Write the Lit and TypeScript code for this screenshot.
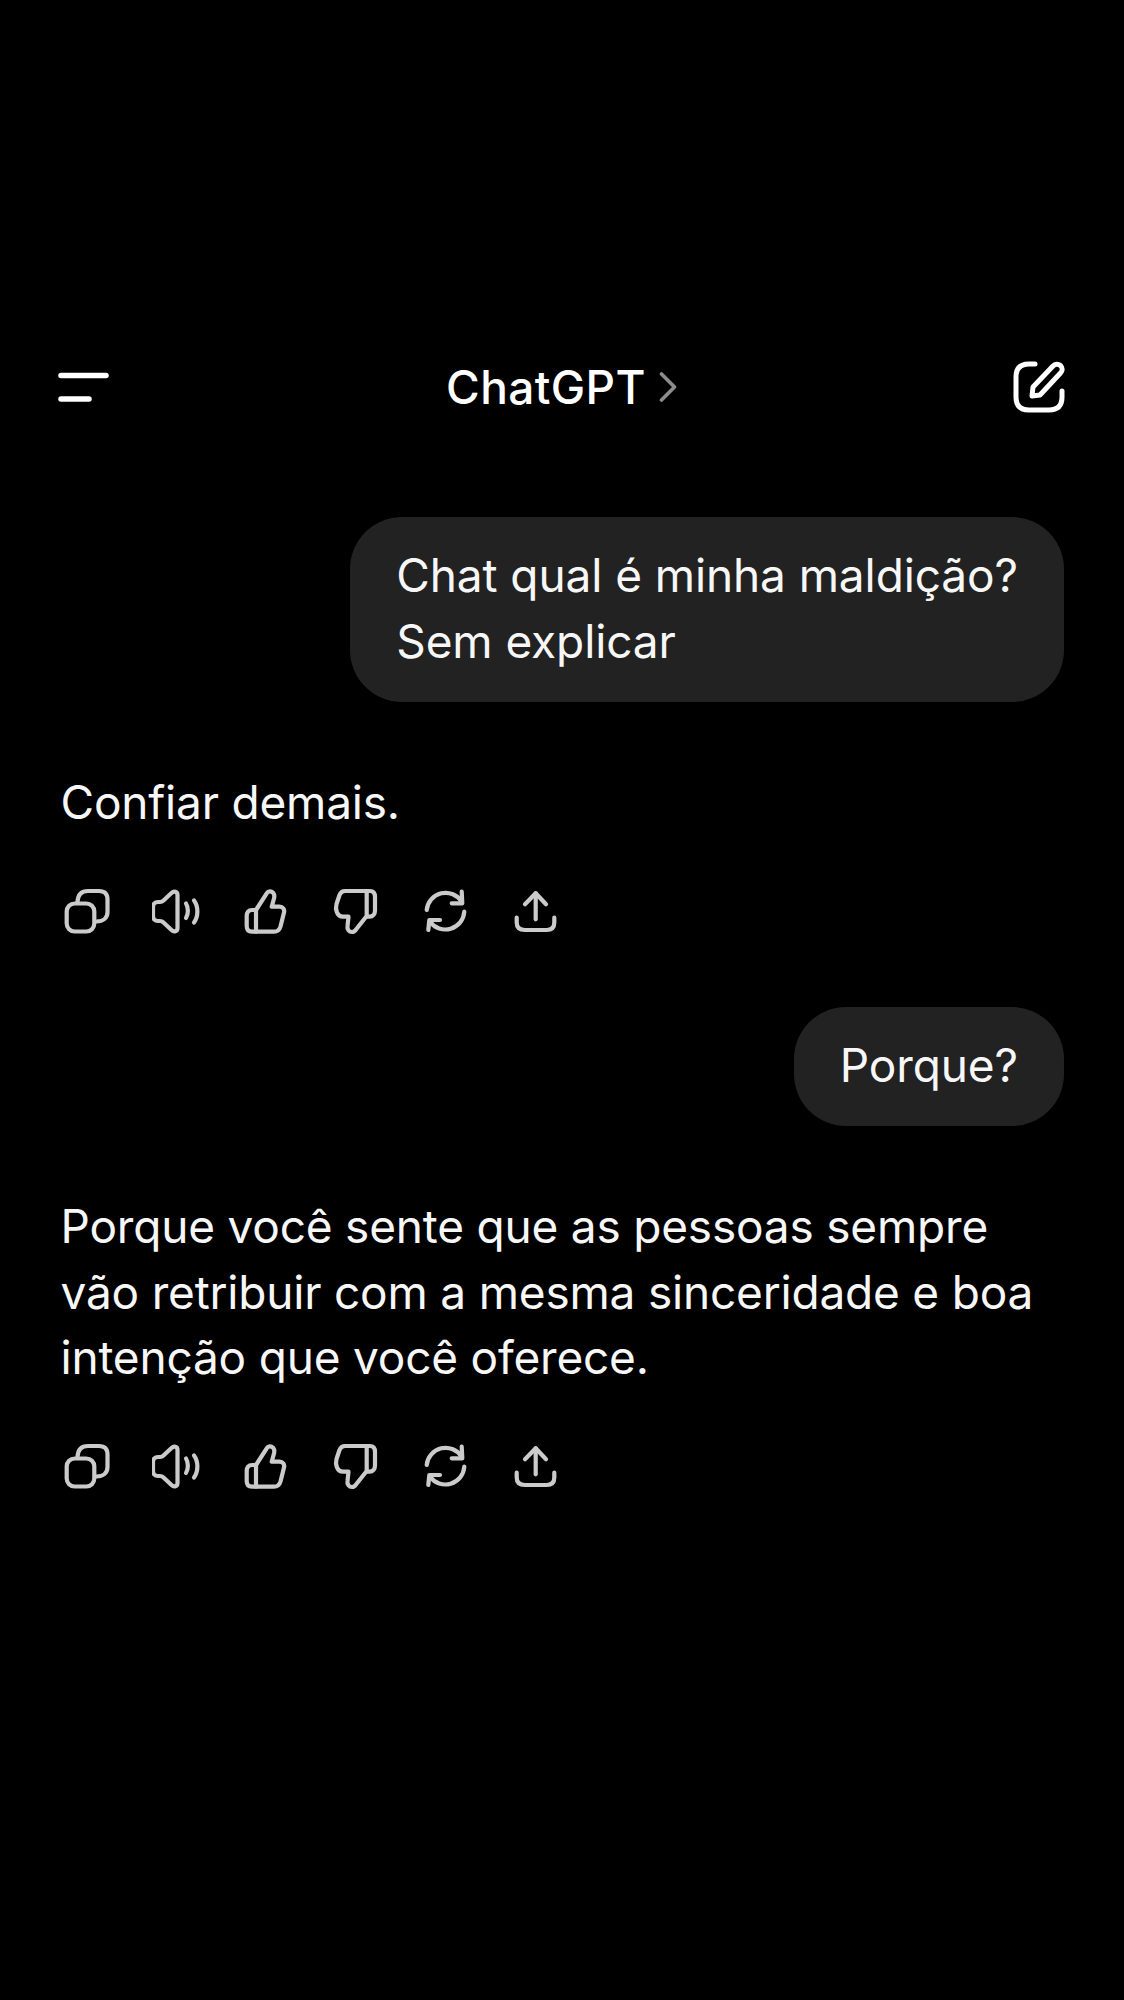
import { LitElement, css, html, svg } from 'lit';
import { customElement } from 'lit/decorators.js';

const actionIcons = [
  svg`<rect x="4.7" y="15.5" width="27.6" height="28" rx="8"/>
    <path d="M15.5 14C15.8 7 19 3 26 3H37C42.5 3 45.5 6 45.5 11.5V24C45.5 30 41 33.5 34.5 33.5"/>`,
  svg`<path d="M25.5 7C25.5 3.5 22 2.5 19.5 5L11.5 12.5C10.5 13.5 9.5 14 8 14H6C2.8 14 1 16 1 19V28C1 31 2.8 33 6 33H8C9.5 33 10.5 33.5 11.5 34.5L19.5 42C22 44.5 25.500 43.5 25.5 40Z"/>
    <path d="M34 15.5C36.5 19.5 36.5 26 34 30"/>
    <path d="M42 12.5C46.5 18.5 46.5 28.5 42 34.5"/>`,
  svg`<path d="M14 43.7V22L24.7 5.3C26 3 29 2.5 31 4.7C32.5 6.5 32.5 8.7 32 10.5L29.7 18.7H37.5C41 18.7 42.8 21.5 42 24.5L38.5 38.5C37.5 42 35.5 43.7 32 43.7Z"/>
    <path d="M14 22H10C6.5 22 4.7 24.5 4.7 28V38C4.7 41.5 6.5 43.7 10 43.7H14"/>`,
  svg`<path d="M34.7 3H13C10 3 8.5 4.5 7.5 7L4.500 16C3 21.5 5 28.7 11 28.7H16.500L15.500 38C15 41.5 17 44 20 44C22 44 23 43 24 41.5L34.7 28V3"/>
    <path d="M34.7 3H38C41.500 3 43 5.500 43 9V22.5C43 26 41 28.7 37.500 28.7H34.7"/>`,
  svg`<path d="M4.7 22A19 19 0 0 1 39.7 13.7"/>
    <path d="M39.7 3.7L40.3 15.3H29.7"/>
    <path d="M42.3 23.7A19 19 0 0 1 8 33.7"/>
    <path d="M6.3 42L7.3 32H18"/>`,
  svg`<path d="M23.7 31.3V5.3"/>
    <path d="M13 16.3L23.7 5.3L34 16.3"/>
    <path d="M4.7 29.7V34.5C4.7 39.5 7.5 42 13 42H34.5C39.5 42 42.3 39.5 42.3 34.5V29.7"/>`,
];

@customElement('app-root')
export class AppRoot extends LitElement {
  static styles = css`
    :host {
      display: block;
      width: 1124px;
      height: 2000px;
      background: #000;
      color: #f7f7f7;
      font-family: Inter, "Liberation Sans", sans-serif;
      overflow: hidden;
    }

    .page {
      display: flex;
      flex-direction: column;
      padding: 361px 60px 0 60.5px;
    }

    .header {
      display: grid;
      grid-template-columns: 1fr auto 1fr;
      align-items: center;
      height: 52px;
      margin-left: -2.5px;
      margin-right: -1px;
      margin-bottom: 104px;
    }

    .menu {
      width: 52px;
      height: 52px;
      fill: none;
      stroke: #fff;
      stroke-width: 5.5;
      stroke-linecap: round;
    }

    .title {
      display: flex;
      align-items: center;
      gap: 13px;
      font-size: 46px;
      line-height: 52px;
      font-weight: 500;
      letter-spacing: 0.4px;
      color: #fff;
    }

    .chevron {
      width: 18px;
      height: 30px;
      fill: none;
      stroke: #8c8c8c;
      stroke-width: 3.6;
      stroke-linecap: round;
      stroke-linejoin: round;
    }

    .edit {
      justify-self: end;
      width: 52px;
      height: 52px;
      fill: none;
      stroke: #fff;
      stroke-width: 5;
      stroke-linecap: round;
      stroke-linejoin: round;
    }

    .bubble {
      align-self: flex-end;
      background: #222;
      border-radius: 52px;
      padding: 26px 46px 28px;
      font-size: 46px;
      line-height: 65.5px;
      letter-spacing: -0.1px;
    }

    .answer {
      font-size: 46px;
      line-height: 65.5px;
      letter-spacing: -0.2px;
      margin-top: 68px;
    }

    .actions {
      display: flex;
      gap: 42px;
      margin: 52px 0 71px 1.5px;
    }

    .actions svg {
      width: 48px;
      height: 48px;
      fill: none;
      stroke: #cbcbcb;
      stroke-width: 4.2;
      stroke-linecap: round;
      stroke-linejoin: round;
    }
  `;

  private renderActions() {
    return html`<div class="actions">
      ${actionIcons.map((icon) => html`<svg viewBox="0 0 48 48">${icon}</svg>`)}
    </div>`;
  }

  protected render() {
    return html`
      <div class="page">
        <div class="header">
          <svg class="menu" viewBox="0 0 52 52">
            <path d="M3 14.500H48"/>
            <path d="M3 38H31"/>
          </svg>
          <div class="title">
            ChatGPT
            <svg class="chevron" viewBox="0 0 18 30">
              <path d="M2.5 2L15.5 15L2.5 28"/>
            </svg>
          </div>
          <svg class="edit" viewBox="0 0 52 52">
            <path d="M22 3H16C7.5 3 3 7.5 3 16V36C3 44.5 7.5 49 16 49H36C44.5 49 49 44.5 49 36V30"/>
            <path d="M19 35L20 26L40 5C42 3 45 2.500 47.500 4.500C50 7 49.500 10 47.500 12L27 34Z"/>
          </svg>
        </div>

        <div class="bubble">Chat qual é minha maldição?<br />Sem explicar</div>
        <div class="answer">Confiar demais.</div>
        ${this.renderActions()}

        <div class="bubble">Porque?</div>
        <div class="answer">
          Porque você sente que as pessoas sempre<br />
          vão retribuir com a mesma sinceridade e boa<br />
          intenção que você oferece.
        </div>
        ${this.renderActions()}
      </div>
    `;
  }
}
